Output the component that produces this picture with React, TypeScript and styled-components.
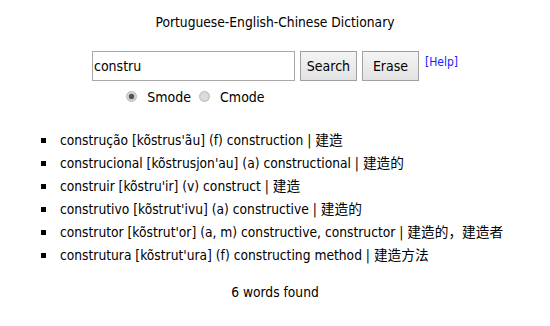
import React from "react";
import styled, { createGlobalStyle } from "styled-components";

const Global = createGlobalStyle`
  html, body { margin: 0; padding: 0; background: #fff; }
  body {
    font-family: "DejaVu Sans Condensed", "DejaVu Sans", "Noto Sans CJK SC", sans-serif;
    font-size: 13.7px;
    color: #000;
  }
`;

const Page = styled.div`
  width: 550px;
  padding-top: 14px;
`;

const Title = styled.div`
  text-align: center;
  line-height: 16px;
`;

const SearchForm = styled.form`
  display: grid;
  grid-template-columns: 203px auto auto auto;
  column-gap: 5px;
  row-gap: 8px;
  justify-content: center;
  margin-top: 21px;
`;

const TextInput = styled.input`
  box-sizing: border-box;
  width: 203px;
  height: 30px;
  border: 1px solid #a9a9a9;
  padding: 0 1px;
  font-family: inherit;
  font-size: 14px;
  color: #000;
  outline: none;
`;

const Button = styled.button`
  box-sizing: border-box;
  width: 57px;
  height: 30px;
  border: 1px solid #a0a0a0;
  background: linear-gradient(#f4f4f4, #e2e2e2);
  font-family: inherit;
  font-size: 14px;
  color: #000;
  padding: 0;
`;

const HelpLink = styled.a`
  align-self: start;
  margin-left: 1px;
  margin-top: 4px;
  font-size: 12px;
  color: #1a1aff;
  text-decoration: none;
`;

const ModeRow = styled.div`
  display: flex;
  justify-content: center;
  align-items: center;
  padding-left: 4px;
  line-height: 16px;
  font-size: 14px;
`;

const Radio = styled.span<{ $checked?: boolean }>`
  box-sizing: border-box;
  width: 11px;
  height: 11px;
  border-radius: 50%;
  border: 1px solid #b8b8b8;
  background: radial-gradient(circle, ${(p) => (p.$checked ? "#555 0 2.5px, #c8c8c8 3px" : "#dcdcdc 0 3px, #d4d4d4 4px")}, #ececec 6px);
  margin: -2px 10px 0 8px;
  &:first-child { margin-left: 0; }
`;

const List = styled.ul`
  list-style: none;
  margin: 24px 0 0 0;
  padding: 0 0 0 41px;
`;

const Item = styled.li`
  display: flex;
  align-items: center;
  height: 23px;
  line-height: 23px;
  white-space: nowrap;
  &::before {
    content: "";
    width: 5px;
    height: 5px;
    background: #000;
    margin-right: 14px;
  }
`;

const Footer = styled.div`
  text-align: center;
  margin-top: 17px;
  line-height: 16px;
`;

const entries = [
  "construção [kõstrus'ãu] (f) construction | 建造",
  "construcional [kõstrusjon'au] (a) constructional | 建造的",
  "construir [kõstru'ir] (v) construct | 建造",
  "construtivo [kõstrut'ivu] (a) constructive | 建造的",
  "construtor [kõstrut'or] (a, m) constructive, constructor | 建造的，建造者",
  "construtura [kõstrut'ura] (f) constructing method | 建造方法",
];

export default function App() {
  return (
    <Page>
      <Global />
      <Title>Portuguese-English-Chinese Dictionary</Title>
      <SearchForm onSubmit={(e) => e.preventDefault()}>
        <TextInput defaultValue="constru" />
        <Button type="submit">Search</Button>
        <Button type="button">Erase</Button>
        <HelpLink href="#">[Help]</HelpLink>
        <ModeRow>
          <Radio $checked />
          <span>Smode</span>
          <Radio />
          <span>Cmode</span>
        </ModeRow>
      </SearchForm>
      <List>
        {entries.map((e) => (
          <Item key={e}>{e}</Item>
        ))}
      </List>
      <Footer>6 words found</Footer>
    </Page>
  );
}
